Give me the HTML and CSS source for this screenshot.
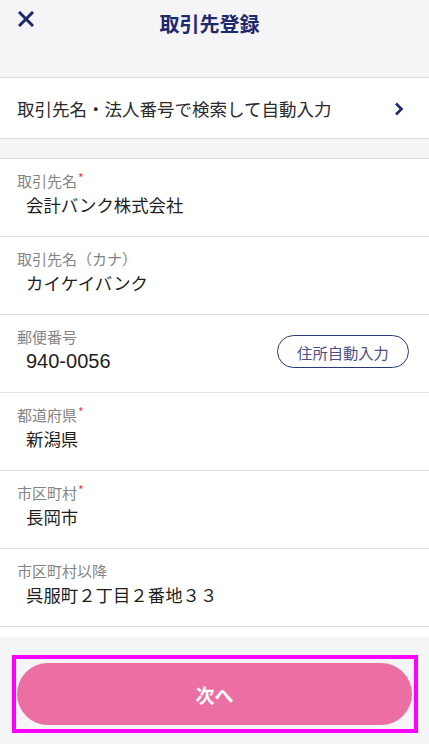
FILE: index.html
```html
<!DOCTYPE html>
<html lang="ja">
<head>
<meta charset="utf-8">
<title>取引先登録</title>
<link rel="stylesheet" href="styles.css">
</head>
<body>
<div class="page">
  <header class="header">
    <button class="close" aria-label="閉じる">
      <svg width="16" height="16" viewBox="0 0 16 16"><path d="M2 2 L14 14 M14 2 L2 14" stroke="#1f2a6e" stroke-width="3" stroke-linecap="square" fill="none"/></svg>
    </button>
    <h1 class="title">取引先登録</h1>
    <div></div>
  </header>

  <div class="search-row">
    <span class="search-text">取引先名・法人番号で検索して自動入力</span>
    <svg class="chevron" width="10" height="14" viewBox="0 0 10 14"><path d="M2 1.5 L7.5 7 L2 12.5" stroke="#1f2a6e" stroke-width="2.6" fill="none"/></svg>
  </div>

  <div class="gap"></div>

  <div class="fields">
    <div class="field">
      <div class="label">取引先名<span class="req">*</span></div>
      <div class="value">会計バンク株式会社</div>
    </div>
    <div class="field">
      <div class="label">取引先名（カナ）</div>
      <div class="value">カイケイバンク</div>
    </div>
    <div class="field field-row">
      <div class="field-main">
        <div class="label">郵便番号</div>
        <div class="value"><span class="num">940-0056</span></div>
      </div>
      <button class="addr-btn">住所自動入力</button>
    </div>
    <div class="field">
      <div class="label">都道府県<span class="req">*</span></div>
      <div class="value">新潟県</div>
    </div>
    <div class="field">
      <div class="label">市区町村<span class="req">*</span></div>
      <div class="value">長岡市</div>
    </div>
    <div class="field">
      <div class="label">市区町村以降</div>
      <div class="value">呉服町２丁目２番地３３</div>
    </div>
    <div class="tail"></div>
  </div>

  <footer class="footer">
    <div class="highlight">
      <button class="next">次へ</button>
    </div>
  </footer>
</div>
</body>
</html>
```

FILE: styles.css
```css
* { box-sizing: border-box; }
html, body {
  margin: 0;
  padding: 0;
  background: #f5f5f8;
}
body {
  font-family: "Noto Sans CJK JP", "Noto Sans", sans-serif;
  color: #222;
}
.page {
  width: 429px;
  height: 744px;
  overflow: hidden;
  display: flex;
  flex-direction: column;
}
.header {
  height: 77px;
  display: grid;
  grid-template-columns: 60px 1fr 70px;
  align-items: start;
  background: #f5f5f8;
}
.close {
  border: 0;
  background: none;
  padding: 0;
  margin: 11px 0 0 18px;
  width: 16px;
  height: 16px;
  display: block;
}
.close svg { display: block; }
.title {
  margin: 10px 0 0;
  font-size: 20px;
  line-height: 28px;
  font-weight: 700;
  color: #1f2a6e;
  text-align: center;
}
.search-row {
  height: 62px;
  background: #fff;
  border-top: 1px solid #e0e0e3;
  border-bottom: 1px solid #e0e0e3;
  display: flex;
  align-items: center;
  justify-content: space-between;
  padding: 0 25px 0 17px;
}
.search-text {
  font-size: 17.5px;
  line-height: 24px;
  color: #2a2a2a;
  margin-top: 2px;
}
.chevron { display: block; margin-top: 2px; }
.gap { height: 19px; }
.fields {
  background: #fff;
  border-top: 1px solid #e0e0e3;
}
.field {
  height: 78px;
  border-bottom: 1px solid #e0e0e3;
  padding: 12px 20px 0 17px;
}
.label {
  font-size: 15px;
  line-height: 20px;
  color: #848484;
}
.req {
  color: #ef3b3b;
  font-size: 12px;
  vertical-align: top;
  line-height: 14px;
  margin-left: 1px;
}
.value {
  margin-top: 2px;
  padding-left: 9px;
  font-size: 17.4px;
  line-height: 24px;
  color: #1e1e1e;
}
.num {
  font-family: "Liberation Sans", "Noto Sans CJK JP", sans-serif;
  font-size: 20px;
  line-height: 24px;
}
.field-row {
  display: flex;
  justify-content: space-between;
  align-items: flex-start;
}
.addr-btn {
  margin-top: 8px;
  width: 132px;
  height: 33px;
  border: 1.5px solid #2b3677;
  border-radius: 17px;
  background: #fff;
  color: #4b5082;
  font-family: inherit;
  font-size: 15.3px;
  padding: 0;
}
.tail { height: 10px; }
.footer {
  flex: 1;
  background: #f5f5f8;
  padding: 18px 11px 0 12px;
}
.highlight {
  border: 4px solid #ff00ff;
  padding: 4px 2px 4px 1px;
}
.next {
  display: block;
  width: 100%;
  height: 62px;
  border: 0;
  border-radius: 31px;
  background: #eb6fa3;
  color: #fff;
  font-family: inherit;
  font-size: 19px;
  font-weight: 700;
}
```
